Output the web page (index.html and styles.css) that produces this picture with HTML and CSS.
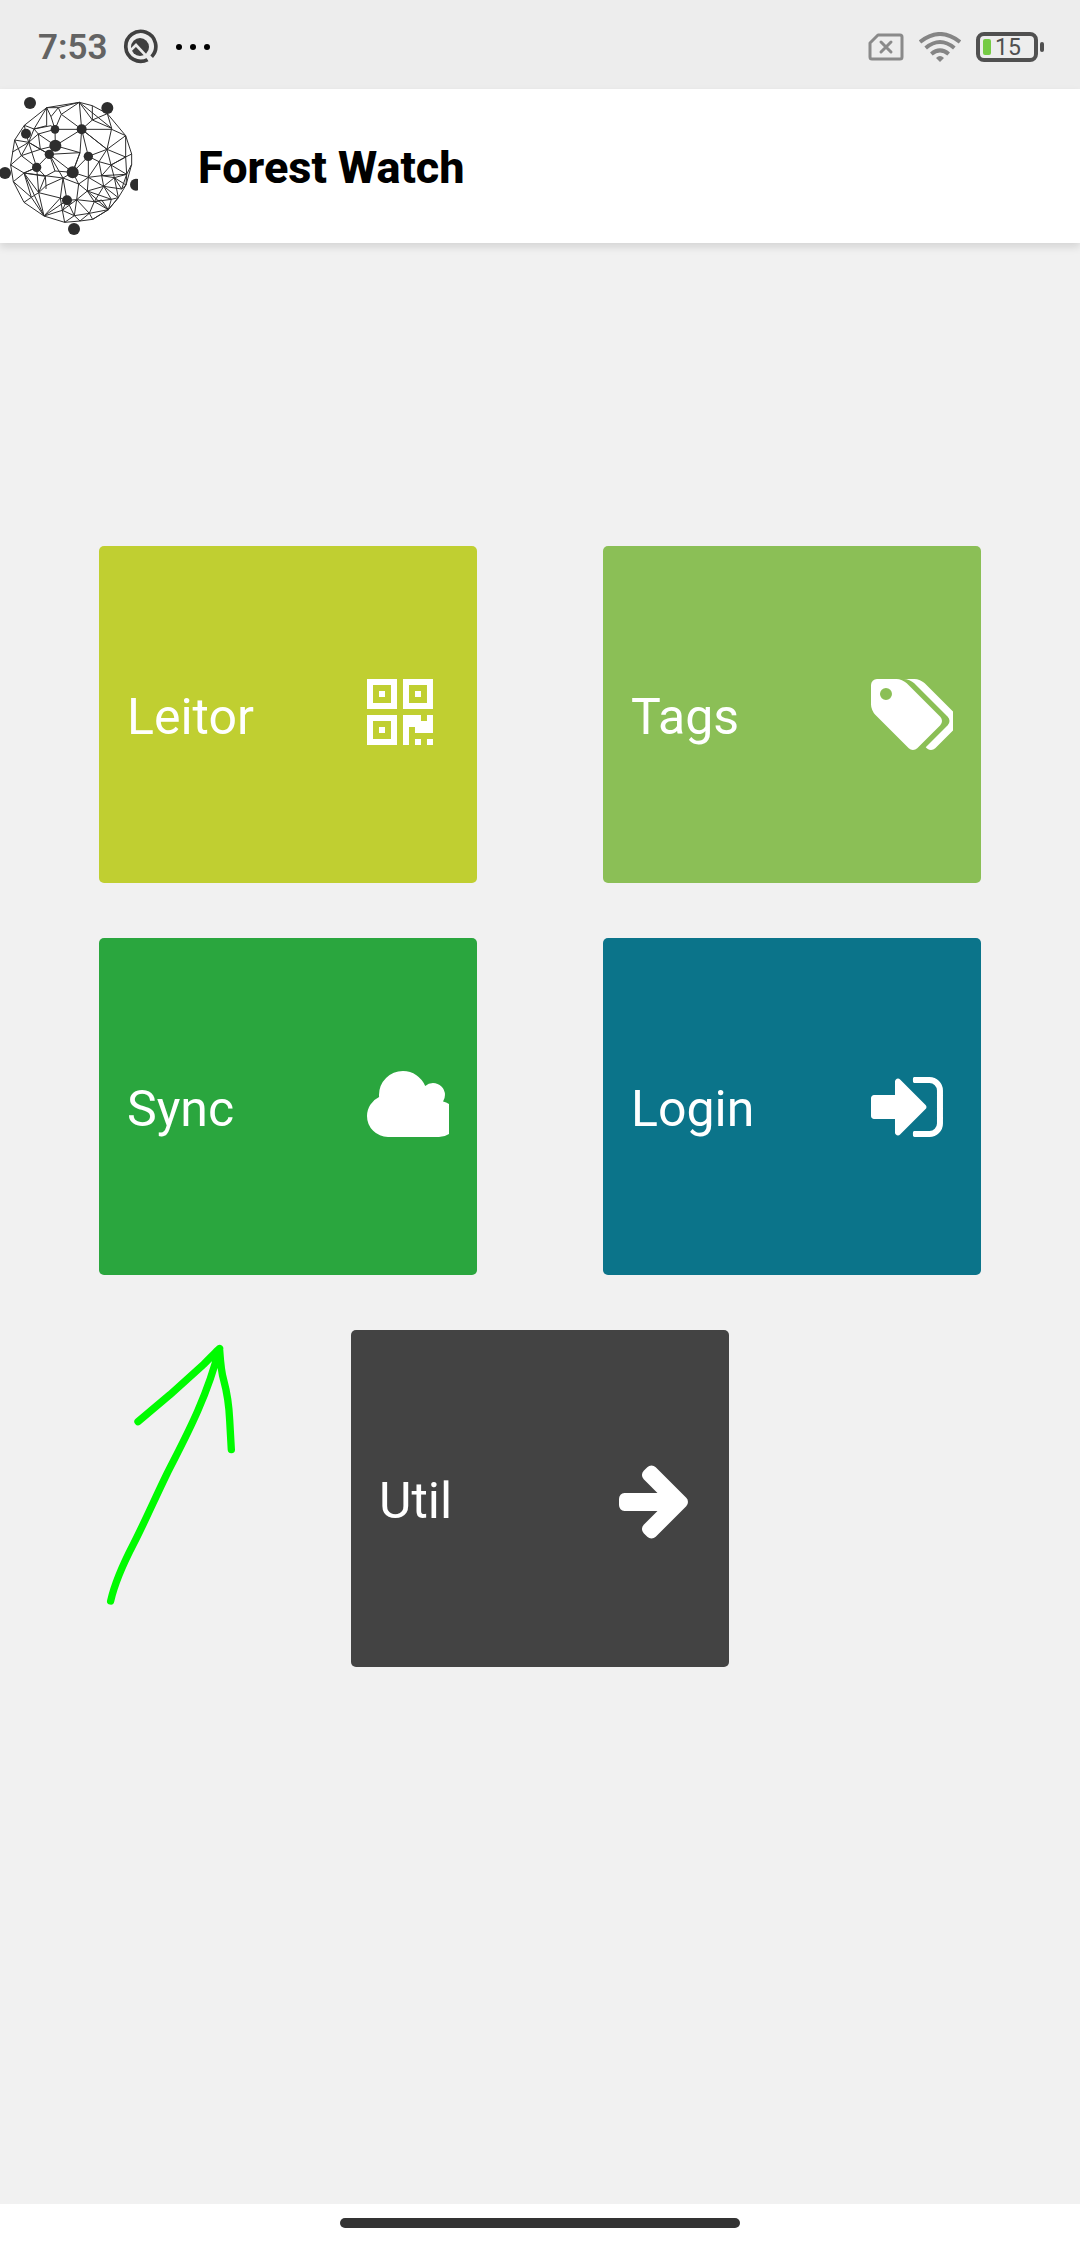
FILE: index.html
```
<!DOCTYPE html>
<html lang="pt">
<head>
    <meta charset="UTF-8">
    <meta name="viewport" content="width=device-width, initial-scale=1.0">
    <title>Forest Watch</title>
    <link rel="stylesheet" href="styles.css">
</head>
<body>
    <div class="status">
        <span class="time">7:53</span>
        <svg class="focus" width="36" height="36" viewBox="0 0 108 108">
            <path d="M89 83A45 45 0 1 0 77 92" fill="none" stroke="#404040" stroke-width="11"/>
            <circle cx="54" cy="54" r="27" fill="#404040"/>
            <path d="M22 68L42 48L88 97" fill="none" stroke="#ededed" stroke-width="8"/>
        </svg>
        <svg class="dots" width="36" height="8" viewBox="0 0 36 8">
            <circle cx="4" cy="4" r="3"/><circle cx="18" cy="4" r="3"/><circle cx="32" cy="4" r="3"/>
        </svg>
        <span class="right">
            <svg width="36" height="28" viewBox="0 0 36 28" fill="none" stroke="#8a8a8a" stroke-width="3">
                <path d="M10 2H32Q34 2 34 4V24Q34 26 32 26H4Q2 26 2 24V10Z" stroke-linejoin="round"/>
                <path d="M13 9L23 19M23 9L13 19" stroke-linecap="round"/>
            </svg>
            <svg width="42" height="30" viewBox="0 0 126 90" fill="none" stroke="#858585" stroke-width="12">
                <path d="M3 30Q63 -18 123 30M20 48Q63 12 106 48M37 66Q63 44 89 66"/>
                <path d="M51 78Q63 66 75 78L63 90Z" fill="#858585" stroke="none"/>
            </svg>
            <span class="battery"><i></i>15</span>
        </span>
    </div>

    <header>
        <svg class="logo" width="138" height="153" viewBox="0 12 414 459">
            <g class="mesh">
                <path d="M140 68L238 52L277 62L322 86L377 152L395 207V238L378 300L355 338L325 374L278 403L240 408L194 412L132 393L72 352L40 290L32 240L44 165L73 121Z"/>
                <path d="M140 68L175 68L238 52L184 88L175 68L153 95L140 68V122L102 132L140 68M73 121L102 132L153 122L165 133L184 88L245 133L238 52L277 105V62M277 105L322 86L335 130L277 105L245 133H335L377 152L321 193L335 130M153 95L165 133H245L321 193L245 133L265 214M238 52L335 130M245 133L166 182L165 133M166 182L115 147L165 133M115 147L102 132L86 172L78 146L73 121M44 165L86 172L115 147L121 193L86 172L64 212L44 165M64 212L32 240M36 202L86 172L110 247L64 212L121 193L166 182L148 208L121 193M86 172L148 208L110 247M166 182L240 203L148 208L218 262L240 203L245 133"/>
                <path d="M240 203L218 262L265 214L321 193L297 230L265 214V277L218 262L189 279L148 208M110 247L136 274L165 258L218 262M165 258L148 208M321 193L377 216V152M377 216L395 207M321 193L333 240L377 216L380 268L395 238M377 216L333 240L297 230L305 272L333 240L380 268L343 278L333 240M343 278L305 272L265 277L297 230M305 272L380 268M32 240L72 264L110 247L116 323L72 264L40 290M72 264L136 274L116 323L94 337L72 264M40 290L94 337L72 352M136 274L138 302L116 323L181 339L189 279L138 302V312M189 279L201 346L181 339L187 376L201 346M189 279L236 297L218 262M236 297L265 277L262 318L236 297L230 344L201 346L223 392L187 376L132 393L116 323M94 337L132 393L181 339M132 393L201 346"/>
                <path d="M187 376L194 412L223 392L240 408L268 385L223 392L230 344L268 385L278 403L325 374L268 385L283 350L230 344L262 318L283 350L305 345L325 374L355 338L334 343L325 374M262 318L311 304L305 272M311 304L343 278L355 338L311 304L334 343L283 350L311 304L265 277M343 278L378 300L365 312L343 278M262 318L334 343M262 318L325 374L283 350M378 300L380 268L365 312L311 304M230 344L187 376M72 264L132 393M110 247L72 264L189 279"/>
            </g>
            <g fill="#2d2d2d">
                <circle cx="90" cy="54" r="18"/><circle cx="322" cy="69" r="18"/>
                <circle cx="15" cy="264" r="18"/><circle cx="408" cy="299" r="18"/>
                <circle cx="222" cy="432" r="18"/><circle cx="166" cy="182" r="18"/>
                <circle cx="218" cy="262" r="18"/><circle cx="78" cy="146" r="15"/>
                <circle cx="245" cy="133" r="15"/><circle cx="201" cy="346" r="15"/>
                <circle cx="165" cy="133" r="13"/><circle cx="148" cy="208" r="14"/>
                <circle cx="265" cy="214" r="14"/><circle cx="110" cy="247" r="14"/>
            </g>
        </svg>
        <h1>Forest Watch</h1>
    </header>

    <main>
        <div class="cards">
            <button class="card leitor">
                <span>Leitor</span>
                <svg viewBox="192 0 1750 1792"><path d="M576 1152v128h-128v-128h128zm0-768v128h-128v-128h128zm768 0v128h-128v-128h128zm-1024 1023h384v-383h-384v383zm0-767h384v-384h-384v384zm768 0h384v-384h-384v384zm-256 256v640h-640v-640h640zm512 512v128h-128v-128h128zm256 0v128h-128v-128h128zm0-512v384h-384v-128h-128v384h-128v-640h384v128h128v-128h128zm-768-768v640h-640v-640h640zm768 0v640h-640v-640h640z"/></svg>
            </button>
            <button class="card tags">
                <span>Tags</span>
                <svg viewBox="-64 0 1750 1792"><path d="M384 448q0-53-37.500-90.500t-90.500-37.500-90.500 37.500-37.500 90.500 37.500 90.500 90.500 37.500 90.500-37.500 37.500-90.500zm1067 576q0 53-37 90l-491 492q-39 37-91 37-53 0-90-37l-715-716q-38-37-64.500-101t-26.500-117v-416q0-52 38-90t90-38h416q53 0 117 26.500t102 64.500l715 714q37 39 37 91zm384 0q0 53-37 90l-491 492q-39 37-91 37-36 0-59-14t-53-45l470-470q37-37 37-90 0-52-37-91l-715-714q-38-38-102-64.500t-117-26.500h224q53 0 117 26.500t102 64.500l715 714q37 39 37 91z"/></svg>
            </button>
            <button class="card sync">
                <span>Sync</span>
                <svg viewBox="64 0 1750 1792"><path d="M1984 1152q0 159-112.500 271.500t-271.500 112.500h-1088q-185 0-316.500-131.500t-131.500-316.500q0-132 71-241.500t187-163.500q-2-28-2-43 0-212 150-362t362-150q158 0 286.500 88t187.500 230q70-62 166-62 106 0 181 75t75 181q0 75-41 138 129 30 213 134.500t84 239.500z"/></svg>
            </button>
            <button class="card login">
                <span>Login</span>
                <svg viewBox="128 0 1750 1792"><path d="M1312 896q0 26-19 45l-544 544q-19 19-45 19t-45-19-19-45v-288h-448q-26 0-45-19t-19-45v-384q0-26 19-45t45-19h448v-288q0-26 19-45t45-19 45 19l544 544q19 19 19 45zm352-352v704q0 119-84.500 203.500t-203.500 84.500h-320q-13 0-22.500-9.500t-9.500-22.500q0-4-1-20t-.5-26.500 3-23.500 10-19.500 20.500-6.500h320q66 0 113-47t47-113v-704q0-66-47-113t-113-47h-312l-11.500-1-11.500-3-8-5.500-7-9-2-13.500q0-4-1-20t-.5-26.500 3-23.500 10-19.500 20.500-6.500h320q119 0 203.500 84.500t84.500 203.500z"/></svg>
            </button>
            <button class="card util">
                <span>Util</span>
                <svg viewBox="128 0 1750 1792"><path d="M1600 960q0 54-37 91l-651 651q-39 37-91 37-51 0-90-37l-75-75q-38-38-38-91t38-91l293-293h-704q-52 0-84.500-37.500t-32.500-90.500v-128q0-53 32.500-90.500t84.500-37.500h704l-293-294q-38-36-38-90t38-90l75-75q38-38 90-38 53 0 91 38l651 651q37 35 37 90z"/></svg>
            </button>
            <!-- hand drawn arrow pointing at Sync -->
            <svg class="pointer" width="160" height="300" viewBox="0 0 480 900">
                <path d="M62 843C75 785 103 725 131 671C167 600 195 535 230 463C275 373 350 240 387 88C400 72 345 130 338 136L240 224L144 305M389 90C391 120 393 153 401 180Q416 235 419 300L424 389"/>
            </svg>
        </div>
    </main>

    <div class="navbar"><span></span></div>
</body>
</html>
```

FILE: styles.css
```
* {
    box-sizing: border-box;
}
body {
    margin: 0;
    min-height: 100vh;
    display: flex;
    flex-direction: column;
    background: #f1f1f1;
    font-family: Roboto, "Liberation Sans", sans-serif;
}
svg {
    display: block;
    flex: none;
}

.status {
    height: 89px;
    padding: 5px 38px 0 38px;
    display: flex;
    align-items: center;
    background: #ededed;
}
.time {
    font-size: 35px;
    font-weight: 600;
    color: #636363;
}
.focus {
    margin-left: 14px;
}
.dots {
    margin-left: 17px;
}
.right {
    margin-left: auto;
    display: flex;
    align-items: center;
    gap: 15px;
}
.battery {
    position: relative;
    width: 62px;
    height: 30px;
    margin-right: 4px;
    padding: 0 0 0 3px;
    display: flex;
    align-items: center;
    gap: 4px;
    border: 4px solid #505050;
    border-radius: 8px;
    font-size: 23px;
    color: #505050;
}
.battery i {
    width: 8px;
    height: 16px;
    border-radius: 2px;
    background: #76cb45;
}
/* battery tip */
.battery::after {
    content: "";
    position: absolute;
    right: -10px;
    width: 4px;
    height: 10px;
    border-radius: 2px;
    background: #505050;
}

header {
    display: flex;
    align-items: center;
    gap: 60px;
    padding-bottom: 1px;
    background: #fff;
    box-shadow: 0 4px 8px rgba(0, 0, 0, 0.12);
}
header h1 {
    margin: 0;
    padding-top: 4px;
    font-size: 45px;
    font-weight: 800;
    color: #000;
}
.mesh {
    fill: none;
    stroke: #2d2d2d;
    stroke-width: 3px;
}

main {
    flex: 1;
    padding: 303px 0 60px;
}
.cards {
    position: relative;
    display: flex;
    flex-wrap: wrap;
    justify-content: center;
    gap: 55px 126px;
}
.card {
    flex: 0 0 35%;
    height: 337px;
    padding: 0 28px;
    display: flex;
    align-items: center;
    justify-content: space-between;
    border: 0;
    border-radius: 5px;
    font-family: inherit;
    font-size: 50px;
    color: #fff;
    cursor: pointer;
}
.card span {
    padding-top: 4px;
}
.card svg {
    width: 82px;
    height: 84px;
    fill: #fff;
}
.leitor {
    background: #c0cf31;
}
.tags {
    background: #8bbf56;
}
.sync {
    background: #2aa63e;
}
.login {
    background: #0b748a;
}
.util {
    background: #434343;
}
.pointer {
    position: absolute;
    top: 774px;
    left: 90px;
    pointer-events: none;
    fill: none;
    stroke: #00fb00;
    stroke-width: 22px;
    stroke-linecap: round;
    stroke-linejoin: round;
}

.navbar {
    height: 44px;
    padding-top: 14px;
    background: #fff;
}
.navbar span {
    display: block;
    width: 37%;
    height: 10px;
    margin: 0 auto;
    border-radius: 5px;
    background: #333;
}
```
